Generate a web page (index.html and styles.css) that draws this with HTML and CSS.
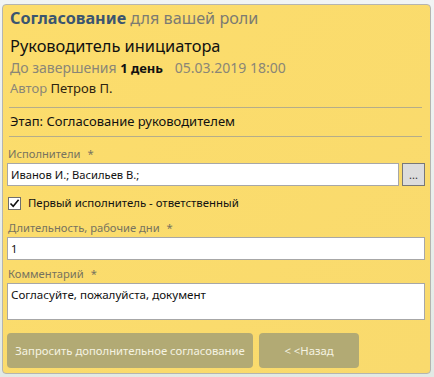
FILE: index.html
```html
<!DOCTYPE html>
<html lang="ru">
<head>
    <meta charset="UTF-8">
    <meta name="viewport" content="width=device-width, initial-scale=1.0">
    <title>Согласование</title>
    <link rel="stylesheet" href="styles.css">
</head>
<body>
    <div class="card">
        <div class="header">
            <h1 class="title"><b>Согласование</b> <span class="role">для вашей роли</span></h1>
            <h2 class="subtitle">Руководитель инициатора</h2>
            <div class="deadline">
                <span class="muted">До завершения</span>
                <b>1 день</b>
                <span class="muted date">05.03.2019 18:00</span>
            </div>
            <div class="author">
                <span class="muted">Автор</span> <span class="author-name">Петров П.</span>
            </div>
        </div>

        <div class="stage">Этап: Согласование руководителем</div>

        <div class="field">
            <label class="field-label">Исполнители <span class="req">*</span></label>
            <div class="picker">
                <input class="text-input" type="text" value="Иванов И.; Васильев В.;">
                <button class="pick-btn">...</button>
            </div>
        </div>

        <label class="check-row">
            <span class="check-box">
                <svg width="11" height="11" viewBox="0 0 11 11"><path d="M1.5 5.5 L4.2 8.3 L9.6 1.8" fill="none" stroke="#111" stroke-width="1.6"/></svg>
            </span>
            <span>Первый исполнитель - ответственный</span>
        </label>

        <div class="field">
            <label class="field-label">Длительность, рабочие дни <span class="req">*</span></label>
            <input class="text-input" type="text" value="1">
        </div>

        <div class="field comment-field">
            <label class="field-label">Комментарий <span class="req">*</span></label>
            <textarea class="text-input comment">Согласуйте, пожалуйста, документ</textarea>
        </div>

        <div class="actions">
            <button class="action-btn">Запросить дополнительное согласование</button>
            <button class="action-btn back">&lt; &lt;Назад</button>
        </div>
    </div>
</body>
</html>
```

FILE: styles.css
```css
* {
    margin: 0;
    padding: 0;
    box-sizing: border-box;
}

body {
    font-family: 'Noto Sans', 'Open Sans', sans-serif;
    background: linear-gradient(180deg, #f1f4f4, #e2eae5);
    width: 434px;
    height: 377px;
    padding: 4px 3px 3px 2px;
    color: #111;
}

.card {
    background: linear-gradient(135deg, #fcdd6c, #f9da6d);
    border: 1px solid #b5b5b0;
    border-radius: 4px;
    height: 370px;
    padding: 3px 5px 0 4px;
}

.header {
    margin: 0 3px 0 2px;
    padding: 0 0 9px 1px;
    border-bottom: 1px solid #b5ad8a;
}

.title {
    font-size: 16.2px;
    font-weight: normal;
    line-height: 20px;
}

.title b {
    color: #3b5570;
}

.role {
    color: #7b7b72;
}

.subtitle {
    margin-top: 6px;
    font-size: 16.4px;
    font-weight: normal;
    line-height: 24px;
    color: #111;
}

.deadline {
    font-size: 14px;
    line-height: 20px;
}

.deadline b {
    font-weight: bold;
    font-size: 13px;
}

.muted {
    color: #8a8677;
}

.date {
    margin-left: 8px;
}

.author {
    font-size: 13px;
    line-height: 20px;
}

.author-name {
    color: #2e2410;
}

.stage {
    margin: 0 3px 0 2px;
    padding: 4px 1px 6px;
    font-size: 13px;
    line-height: 18px;
    border-bottom: 1px solid #b5ad8a;
}

.field {
    margin-top: 7px;
}

.comment-field {
    margin-top: 4px;
}

.field-label {
    display: block;
    font-size: 11.2px;
    color: #77735f;
    line-height: 19px;
    padding-left: 1px;
}

.req {
    margin-left: 4px;
}

.picker {
    display: flex;
    gap: 3px;
}

.text-input {
    display: block;
    width: 100%;
    height: 23px;
    border: 1px solid #a7a7a7;
    background: #fff;
    font-family: inherit;
    font-size: 11.2px;
    color: #111;
    padding: 0 3px;
    outline: none;
}

.pick-btn {
    flex: 0 0 23px;
    height: 23px;
    background: #dcdcdc;
    border: 1px solid #787878;
    font-family: inherit;
    font-size: 11px;
    color: #333;
}

.check-row {
    display: flex;
    align-items: center;
    gap: 7px;
    margin-top: 9px;
    font-size: 11.4px;
    line-height: 16px;
    padding-left: 1px;
}

.check-box {
    width: 13px;
    height: 13px;
    background: #fff;
    border: 1px solid #6e6e6e;
    display: flex;
    align-items: center;
    justify-content: center;
}

.comment {
    height: 37px;
    resize: none;
    padding: 3px;
    font-size: 11.6px;
    line-height: 16px;
}

.actions {
    display: flex;
    gap: 6px;
    margin-top: 13px;
}

.action-btn {
    background: #b2aa74;
    color: #f5f3e2;
    border: none;
    border-radius: 4px;
    height: 35px;
    padding: 0;
    font-family: inherit;
    font-size: 11.3px;
    white-space: nowrap;
    width: 246px;
}

.action-btn.back {
    width: 100px;
}
```
